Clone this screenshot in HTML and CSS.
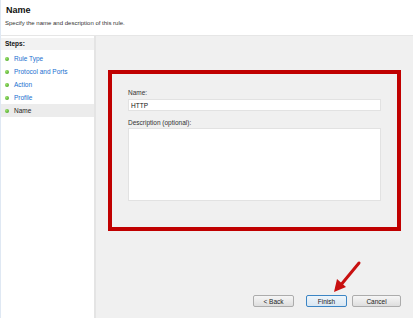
FILE: index.html
```html
<!DOCTYPE html>
<html lang="en">
<head>
    <meta charset="UTF-8">
    <meta name="viewport" content="width=device-width, initial-scale=1.0">
    <title>New Inbound Rule Wizard - Name</title>
    <link rel="stylesheet" href="styles.css">
</head>
<body>
    <div class="wizard">
        <header class="head">
            <h1>Name</h1>
            <p>Specify the name and description of this rule.</p>
        </header>

        <div class="main">
            <nav class="steps">
                <div class="steps-title">Steps:</div>
                <ul>
                    <li><span class="dot"></span><a href="#">Rule Type</a></li>
                    <li><span class="dot"></span><a href="#">Protocol and Ports</a></li>
                    <li><span class="dot"></span><a href="#">Action</a></li>
                    <li><span class="dot"></span><a href="#">Profile</a></li>
                    <li class="current"><span class="dot"></span>Name</li>
                </ul>
            </nav>

            <section class="content">
                <div class="highlight">
                    <label for="rule-name">Name:</label>
                    <input id="rule-name" type="text" value="HTTP">
                    <label for="rule-desc" class="desc-label">Description (optional):</label>
                    <textarea id="rule-desc"></textarea>
                </div>

                <div class="buttons">
                    <button class="btn">&lt; Back</button>
                    <button class="btn btn-default">Finish</button>
                    <button class="btn btn-cancel">Cancel</button>
                </div>
            </section>
        </div>

        <!-- red arrow pointing at Finish -->
        <svg class="arrow" width="40" height="40" viewBox="0 0 40 40">
            <line x1="33" y1="3" x2="14" y2="26" stroke="#c81010" stroke-width="3" stroke-linecap="round"/>
            <polygon points="8,32 11,19 20,27" fill="#c81010"/>
        </svg>
    </div>
</body>
</html>
```

FILE: styles.css
```css
* {
    box-sizing: border-box;
}
body {
    margin: 0;
    font-family: 'Liberation Sans', Arial, sans-serif;
    font-size: 6.5px;
    color: #222;
}
.wizard {
    position: relative;
    width: 413px;
    height: 318px;
    display: flex;
    flex-direction: column;
    background: #f0f0f0;
    border-left: 1px solid #dfe8f3;
    overflow: hidden;
}
.head {
    height: 36px;
    background: #fff;
    border-bottom: 1px solid #e6e6e6;
    padding: 5px 0 0 4px;
}
.head h1 {
    margin: 0 0 0 1px;
    font-size: 9px;
    line-height: 11px;
    font-weight: bold;
    color: #111;
}
.head p {
    margin: 3px 0 0;
    font-size: 6px;
    line-height: 8px;
    color: #333;
}
.main {
    flex: 1;
    display: flex;
}
.steps {
    width: 95px;
    background: #fff;
    border-right: 2px solid #e4e4e4;
    padding-top: 2px;
}
.steps-title {
    height: 12px;
    line-height: 12px;
    padding-left: 4px;
    background: #f2f2f2;
    font-weight: bold;
    color: #111;
}
.steps ul {
    list-style: none;
    margin: 2px 0 0;
    padding: 0;
}
.steps li {
    height: 13px;
    line-height: 13px;
    display: flex;
    align-items: center;
    padding-left: 4px;
}
.steps li a {
    color: #1a6fd0;
    text-decoration: none;
}
.steps li.current {
    background: #ececec;
    color: #222;
}
.dot {
    width: 4px;
    height: 4px;
    border-radius: 50%;
    background: radial-gradient(circle at 35% 35%, #9be36a, #3d9a1c);
    margin-right: 5px;
}
.content {
    flex: 1;
    display: flex;
    flex-direction: column;
    padding: 34px 12px 11px 12px;
}
.highlight {
    height: 161px;
    border: 4px solid #c00000;
    padding: 15px 16px 0 16px;
    display: flex;
    flex-direction: column;
}
.highlight label {
    line-height: 8px;
    color: #333;
    margin-bottom: 2px;
}
.highlight .desc-label {
    margin-top: 8px;
    margin-bottom: 1px;
}
.highlight input,
.highlight textarea {
    font-family: 'Liberation Sans', Arial, sans-serif;
    font-size: 6.5px;
    background: #fff;
    border: 1px solid #e2e2e2;
    outline: none;
    margin: 0;
}
.highlight input {
    height: 12px;
    padding: 0 2px;
    color: #111;
}
.highlight textarea {
    height: 73px;
    resize: none;
}
.buttons {
    margin-top: auto;
    display: flex;
    justify-content: flex-end;
}
.btn {
    height: 12px;
    padding: 0;
    font-family: 'Liberation Sans', Arial, sans-serif;
    font-size: 6.5px;
    color: #222;
    border: 1px solid #acacac;
    border-radius: 2px;
    background: linear-gradient(#f6f6f6, #dedede);
    width: 41px;
}
.btn-default {
    border-color: #3c85c4;
    background: linear-gradient(#eef5fb, #d9e6f2);
    margin-left: 12px;
}
.btn-cancel {
    width: 49px;
    margin-left: 5px;
}
.arrow {
    position: absolute;
    left: 325px;
    top: 260px;
}
```
